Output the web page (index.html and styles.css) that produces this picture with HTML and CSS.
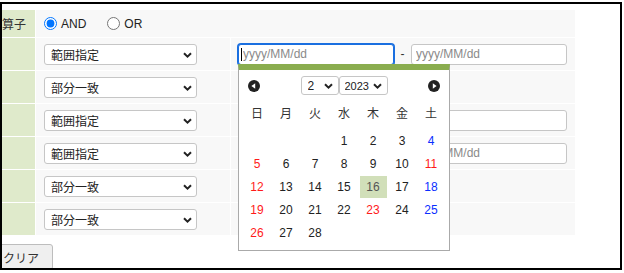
FILE: index.html
```html
<!DOCTYPE html>
<html lang="ja">
<head>
<meta charset="utf-8">
<title>検索条件</title>
<link rel="stylesheet" href="styles.css">
</head>
<body>
<div class="frame">
  <div class="content">
    <div class="form">
      <div class="label">演算子</div>
      <div class="cell c2 span2">
        <label class="radio"><input type="radio" name="op" checked>AND</label>
        <label class="radio"><input type="radio" name="op">OR</label>
      </div>

      <div class="label"></div>
      <div class="cell c2">
        <span class="sel"><select class="msel"><option>範囲指定</option><option>部分一致</option></select><svg class="chev" width="9" height="6" viewBox="0 0 9 6"><path d="M1 1.2 L4.5 4.6 L8 1.2" stroke="#222" stroke-width="2" fill="none"/></svg></span>
      </div>
      <div class="cell c3">
        <span class="dp-wrap">
          <input class="date focus" type="text" placeholder="yyyy/MM/dd">
          <span class="caret"></span>
          <div class="cal">
            <div class="cal-head">
              <svg class="nav" width="12" height="12" viewBox="0 0 12 12"><circle cx="6" cy="6" r="6" fill="#222"/><path d="M3.4 6 L7.2 3.2 V8.8 Z" fill="#fff"/></svg>
              <div class="cal-sels">
                <span class="sel"><select class="csel mon"><option>2</option></select><svg class="chev cchev" width="9" height="6" viewBox="0 0 9 6"><path d="M1 1.2 L4.5 4.6 L8 1.2" stroke="#222" stroke-width="2" fill="none"/></svg></span>
                <span class="sel"><select class="csel year"><option>2023</option></select><svg class="chev cchev" width="9" height="6" viewBox="0 0 9 6"><path d="M1 1.2 L4.5 4.6 L8 1.2" stroke="#222" stroke-width="2" fill="none"/></svg></span>
              </div>
              <svg class="nav" width="12" height="12" viewBox="0 0 12 12"><circle cx="6" cy="6" r="6" fill="#222"/><path d="M8.6 6 L4.8 3.2 V8.8 Z" fill="#fff"/></svg>
            </div>
            <div class="wdays">
              <span>日</span><span>月</span><span>火</span><span>水</span><span>木</span><span>金</span><span>土</span>
            </div>
            <div class="days">
              <span></span><span></span><span></span><span>1</span><span>2</span><span>3</span><span class="sat">4</span>
              <span class="sun">5</span><span>6</span><span>7</span><span>8</span><span>9</span><span>10</span><span class="hol">11</span>
              <span class="sun">12</span><span>13</span><span>14</span><span>15</span><span class="today">16</span><span>17</span><span class="sat">18</span>
              <span class="sun">19</span><span>20</span><span>21</span><span>22</span><span class="hol">23</span><span>24</span><span class="sat">25</span>
              <span class="sun">26</span><span>27</span><span>28</span><span></span><span></span><span></span><span></span>
            </div>
          </div>
        </span>
        <span class="dash">-</span>
        <input class="date" type="text" placeholder="yyyy/MM/dd">
      </div>

      <div class="label"></div>
      <div class="cell c2">
        <span class="sel"><select class="msel"><option>部分一致</option></select><svg class="chev" width="9" height="6" viewBox="0 0 9 6"><path d="M1 1.2 L4.5 4.6 L8 1.2" stroke="#222" stroke-width="2" fill="none"/></svg></span>
      </div>
      <div class="cell c3"><input class="date" type="text"></div>

      <div class="label"></div>
      <div class="cell c2">
        <span class="sel"><select class="msel"><option>範囲指定</option></select><svg class="chev" width="9" height="6" viewBox="0 0 9 6"><path d="M1 1.2 L4.5 4.6 L8 1.2" stroke="#222" stroke-width="2" fill="none"/></svg></span>
      </div>
      <div class="cell c3"><input class="date" type="text"><span class="dash">-</span><input class="date" type="text"></div>

      <div class="label"></div>
      <div class="cell c2">
        <span class="sel"><select class="msel"><option>範囲指定</option></select><svg class="chev" width="9" height="6" viewBox="0 0 9 6"><path d="M1 1.2 L4.5 4.6 L8 1.2" stroke="#222" stroke-width="2" fill="none"/></svg></span>
      </div>
      <div class="cell c3"><input class="date" type="text" placeholder="yyyy/MM/dd"><span class="dash">-</span><input class="date" type="text" placeholder="yyyy/MM/dd"></div>

      <div class="label"></div>
      <div class="cell c2">
        <span class="sel"><select class="msel"><option>部分一致</option></select><svg class="chev" width="9" height="6" viewBox="0 0 9 6"><path d="M1 1.2 L4.5 4.6 L8 1.2" stroke="#222" stroke-width="2" fill="none"/></svg></span>
      </div>
      <div class="cell c3"><input class="date" type="text"></div>

      <div class="label"></div>
      <div class="cell c2">
        <span class="sel"><select class="msel"><option>部分一致</option></select><svg class="chev" width="9" height="6" viewBox="0 0 9 6"><path d="M1 1.2 L4.5 4.6 L8 1.2" stroke="#222" stroke-width="2" fill="none"/></svg></span>
      </div>
      <div class="cell c3"><input class="date" type="text"></div>
    </div>
    <button class="clear" type="button">クリア</button>
  </div>
</div>
</body>
</html>
```

FILE: styles.css
```css
* { box-sizing: border-box; }

body {
  margin: 0;
  padding-top: 2px;
  background: #fff;
  color: #222;
  font-family: "Liberation Sans", "Noto Sans CJK JP", sans-serif;
  font-size: 12px;
}

.frame {
  width: 622px;
  height: 268px;
  border: 2px solid #000;
  overflow: hidden;
}

.content {
  margin-left: -16px;
  padding-top: 6px;
}

.form {
  display: grid;
  grid-template-columns: 49px 194px 344px;
  grid-template-rows: 27px repeat(6, 32px);
  gap: 1px;
  width: 589px;
}

.label {
  background: #dfeacb;
  display: flex;
  align-items: center;
  padding-left: 4px;
  font-family: "Noto Sans CJK JP", sans-serif;
  font-size: 12px;
  color: #333;
  white-space: nowrap;
}

.cell {
  background: #f8f8f8;
  display: flex;
  align-items: center;
}

.c2 { padding-left: 8px; }
.c3 { padding-left: 7px; }
.span2 { grid-column: span 2; }

.radio {
  display: inline-flex;
  align-items: center;
  gap: 4px;
  margin-right: 21px;
  font-size: 12px;
  color: #222;
}

.radio input {
  margin: 0;
  width: 13px;
  height: 13px;
  accent-color: #0075ff;
}

.sel {
  position: relative;
  display: inline-block;
  line-height: 0;
}

.msel {
  appearance: none;
  -webkit-appearance: none;
  width: 153px;
  height: 21px;
  border: 1px solid #c6c6c6;
  border-radius: 3px;
  background: #fff;
  padding: 0 0 0 6px;
  margin: 0;
  font-family: "Noto Sans CJK JP", sans-serif;
  font-size: 12px;
  color: #222;
}

.chev {
  position: absolute;
  right: 5px;
  top: 8px;
  pointer-events: none;
}

.date {
  width: 156px;
  height: 21px;
  margin: 0;
  border: 1px solid #c6c6c6;
  border-radius: 3px;
  background: #fff;
  padding: 0 4px;
  font-family: "Liberation Sans", sans-serif;
  font-size: 12px;
  color: #222;
  outline: none;
}

.date::placeholder { color: #8a8a8a; }

.date.focus {
  border-color: #1a6fe0;
  box-shadow: 0 0 0 1px #1a6fe0;
}

.dash {
  width: 17px;
  text-align: center;
  color: #333;
}

.dp-wrap {
  position: relative;
  display: inline-block;
  line-height: 0;
}

.caret {
  position: absolute;
  left: 3px;
  top: 4px;
  width: 1px;
  height: 13px;
  background: #000;
}

.cal {
  position: absolute;
  top: 20px;
  left: 0;
  z-index: 5;
  width: 212px;
  height: 187px;
  background: #fff;
  border: 1px solid #aaa;
  border-top: 6px solid #8aad4f;
  padding: 0 4px 6px;
  line-height: normal;
}

.cal-head {
  height: 32px;
  display: flex;
  align-items: center;
  justify-content: space-between;
  padding: 0 5px;
}

.cal-sels { display: flex; }

.csel {
  appearance: none;
  -webkit-appearance: none;
  height: 19px;
  margin: 0;
  border: 1px solid #c6c6c6;
  border-radius: 3px;
  background: #fff;
  font-family: "Liberation Sans", sans-serif;
  font-size: 12px;
  color: #222;
}

.mon { width: 38px; padding-left: 6px; }
.year { width: 49px; padding-left: 5px; font-size: 11px; }

.cchev { right: 6px; top: 7px; }

.wdays, .days {
  display: grid;
  grid-template-columns: repeat(7, 27px);
  column-gap: 2px;
  justify-content: center;
}

.wdays {
  height: 22px;
  align-items: center;
  font-family: "Noto Sans CJK JP", sans-serif;
  font-size: 12px;
  color: #333;
}

.wdays span, .days span {
  display: flex;
  align-items: center;
  justify-content: center;
}

.days {
  margin-top: 6px;
  grid-template-rows: repeat(5, 22px);
  row-gap: 1px;
  font-size: 12px;
  color: #222;
}

.days .sun, .days .hol { color: #ff1a1a; }
.days .sat { color: #0a2eff; }
.days .today { background: #d1dfb9; color: #555; }

.clear {
  display: block;
  margin: 9px 0 0 4px;
  height: 26px;
  padding: 0 13px 0 12px;
  border: 1px solid #bdbdbd;
  border-radius: 3px;
  background: #efefef;
  font-family: "Noto Sans CJK JP", sans-serif;
  font-size: 12px;
  color: #333;
}
```
